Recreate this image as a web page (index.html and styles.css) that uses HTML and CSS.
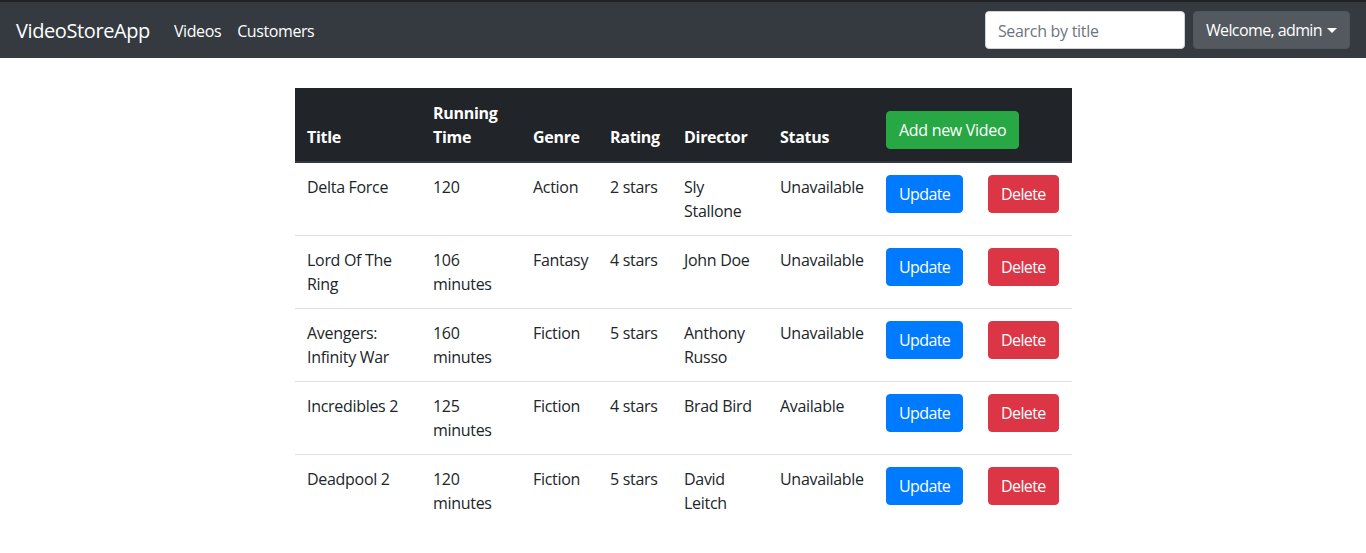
FILE: index.html
```html
<!DOCTYPE html>
<html lang="en">
<head>
<meta charset="utf-8">
<title>VideoStoreApp</title>
<link rel="stylesheet" href="styles.css">
</head>
<body>
<div class="topline"></div>
<nav class="navbar">
  <a class="brand" href="#">VideoStoreApp</a>
  <ul class="nav">
    <li><a class="nav-link" href="#">Videos</a></li>
    <li><a class="nav-link" href="#">Customers</a></li>
  </ul>
  <form class="search">
    <input class="search-input" type="text" placeholder="Search by title">
    <button class="btn btn-secondary" type="button">Welcome, admin<span class="caret"></span></button>
  </form>
</nav>
<main class="container">
  <table class="table">
    <colgroup>
      <col style="width:126px"><col style="width:100px"><col style="width:77px"><col style="width:74px">
      <col style="width:96px"><col style="width:106px"><col style="width:102px"><col style="width:96px">
    </colgroup>
    <thead>
      <tr>
        <th>Title</th>
        <th>Running Time</th>
        <th>Genre</th>
        <th>Rating</th>
        <th>Director</th>
        <th>Status</th>
        <th colspan="2"><button class="btn btn-success" type="button">Add new Video</button></th>
      </tr>
    </thead>
    <tbody>
      <tr>
        <td>Delta Force</td><td>120</td><td>Action</td><td>2 stars</td><td>Sly Stallone</td><td>Unavailable</td>
        <td><button class="btn btn-primary" type="button">Update</button></td>
        <td><button class="btn btn-danger" type="button">Delete</button></td>
      </tr>
      <tr>
        <td>Lord Of The Ring</td><td>106 minutes</td><td>Fantasy</td><td>4 stars</td><td>John Doe</td><td>Unavailable</td>
        <td><button class="btn btn-primary" type="button">Update</button></td>
        <td><button class="btn btn-danger" type="button">Delete</button></td>
      </tr>
      <tr>
        <td>Avengers: Infinity War</td><td>160 minutes</td><td>Fiction</td><td>5 stars</td><td>Anthony Russo</td><td>Unavailable</td>
        <td><button class="btn btn-primary" type="button">Update</button></td>
        <td><button class="btn btn-danger" type="button">Delete</button></td>
      </tr>
      <tr>
        <td>Incredibles 2</td><td>125 minutes</td><td>Fiction</td><td>4 stars</td><td>Brad Bird</td><td>Available</td>
        <td><button class="btn btn-primary" type="button">Update</button></td>
        <td><button class="btn btn-danger" type="button">Delete</button></td>
      </tr>
      <tr>
        <td>Deadpool 2</td><td>120 minutes</td><td>Fiction</td><td>5 stars</td><td>David Leitch</td><td>Unavailable</td>
        <td><button class="btn btn-primary" type="button">Update</button></td>
        <td><button class="btn btn-danger" type="button">Delete</button></td>
      </tr>
    </tbody>
  </table>
</main>
</body>
</html>
```
FILE: styles.css
```css
* { box-sizing: border-box; }
html, body { margin: 0; }
body {
  font-family: "Segoe UI", "Open Sans", "Noto Sans", sans-serif;
  font-size: 16px;
  line-height: 1.5;
  color: #212529;
  background: #fff;
}
.topline { height: 2px; background: #202226; }
.navbar {
  display: flex;
  align-items: center;
  background: #343a40;
  padding: 8px 16px;
  height: 56px;
}
.brand {
  font-size: 20px;
  line-height: 30px;
  padding-top: 2px;
  color: #fff;
  text-decoration: none;
  margin-right: 16px;
  letter-spacing: -0.4px;
}
.nav {
  display: flex;
  list-style: none;
  margin: 0;
  padding: 0;
  flex: 1;
}
.nav-link {
  display: block;
  padding: 9px 8px 7px;
  color: #fff;
  text-decoration: none;
  letter-spacing: -0.4px;
}
.search { display: flex; align-items: center; gap: 8px; margin: 0; }
.search-input {
  width: 200px;
  height: 38px;
  padding: 7px 12px 5px;
  font: inherit;
  color: #495057;
  background: #fff;
  border: 1px solid #ced4da;
  border-radius: 4px;
  letter-spacing: -0.3px;
}
.search-input::placeholder { color: #6c757d; }
.btn {
  display: inline-block;
  font: inherit;
  font-weight: 400;
  line-height: 24px;
  padding: 6px 12px;
  border: 1px solid transparent;
  border-radius: 4px;
  color: #fff;
  cursor: pointer;
  white-space: nowrap;
  letter-spacing: -0.6px;
}
.btn-secondary { background: #53595f; border-color: #4e555b; }
.caret {
  display: inline-block;
  margin-left: 5px;
  vertical-align: 3px;
  border-top: 5px solid #fff;
  border-left: 5px solid transparent;
  border-right: 5px solid transparent;
}
.btn-success { background: #28a745; border-color: #28a745; letter-spacing: -0.3px; }
.btn-primary { background: #007bff; border-color: #007bff; }
.btn-danger { background: #dc3545; border-color: #dc3545; }
.container {
  display: flex;
  justify-content: center;
  padding: 30px 0 0 1px;
}
.table {
  width: 777px;
  table-layout: fixed;
  border-collapse: collapse;
}
.table th, .table td {
  padding: 12px;
  text-align: left;
  vertical-align: top;
  letter-spacing: -0.3px;
}
.table thead th {
  background: #212529;
  color: #fff;
  font-weight: 700;
  vertical-align: bottom;
  padding-top: 13px;
  border-bottom: 2px solid #32383e;
}
.table tbody td { border-top: 1px solid #dee2e6; }
.table tbody tr:first-child td { border-top: none; }
.table tbody tr { border-bottom: 1px solid #dee2e6; }
.table tbody tr:last-child { border-bottom: none; }
```
